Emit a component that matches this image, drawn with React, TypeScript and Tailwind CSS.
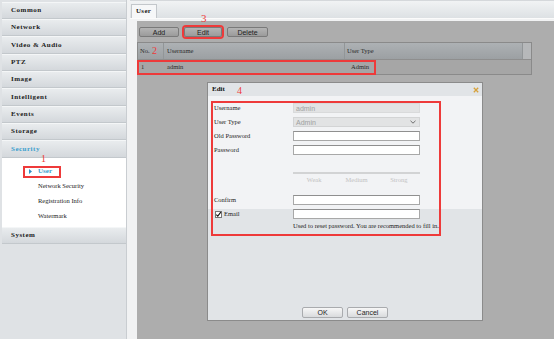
import React from "react";

function NavItem({ label, active, h }: { label: string; active?: boolean; h: string }) {
  return (
    <div
      className={
        "shrink-0 flex items-center pl-[9px] border-t border-t-[#f4f6f7] border-b border-b-[#c3c8cc] bg-linear-to-b from-[#e9ecee] to-[#d4d8dc] text-[7px] font-bold tracking-[0.5px] " +
        h +
        (active ? " text-[#3a9fce]" : " text-[#1b1b1b]")
      }
    >
      {label}
    </div>
  );
}

function GrayBtn({ label, w, mark }: { label: string; w: string; mark?: boolean }) {
  return (
    <div
      className={
        "h-[10px] flex items-center justify-center rounded-[2px] border border-[#7a7a7a] bg-linear-to-b from-[#b4b4b4] to-[#9b9b9b] text-[7px] leading-none text-[#1e1e1e] font-['Liberation_Sans',sans-serif] " +
        w +
        (mark ? " ring-2 ring-[#ee3a3a]" : "")
      }
    >
      {label}
    </div>
  );
}

function DlgBtn({ label }: { label: string }) {
  return (
    <div className="w-[41px] h-[11px] flex items-center justify-center rounded-[2px] border border-[#a9abae] bg-linear-to-b from-[#f7f7f7] to-[#d9dbdd] text-[7px] leading-none text-[#1e1e1e] font-['Liberation_Sans',sans-serif]">
      {label}
    </div>
  );
}

function Field({ label, children, mt }: { label: string; children?: React.ReactNode; mt: string }) {
  return (
    <div className={"flex items-center h-[10px] " + mt}>
      <div className="w-[79px] text-[6.5px] leading-none text-[#222]">{label}</div>
      {children}
    </div>
  );
}

function WhiteInput() {
  return <div className="w-[127px] h-[10px] bg-white border border-[#a8a8a8] border-t-[#8f8f8f]" />;
}

export default function App() {
  const items: [string, string][] = [
    ["Common", "h-[17px]"],
    ["Network", "h-[17px]"],
    ["Video & Audio", "h-[18px]"],
    ["PTZ", "h-[17px]"],
    ["Image", "h-[17px]"],
    ["Intelligent", "h-[18px]"],
    ["Events", "h-[17px]"],
    ["Storage", "h-[17px]"],
  ];
  return (
    <div className="relative w-[554px] h-[339px] flex overflow-hidden bg-[#f1f2f3] font-['Liberation_Serif',serif]">
      {/* Sidebar */}
      <div className="w-[127px] h-full shrink-0 flex flex-col bg-[#dfe2e5] border-r border-[#c9cdd1] pt-[2px] pl-[2px]">
        {items.map(([n, h]) => (
          <NavItem key={n} label={n} h={h} />
        ))}
        <NavItem label="Security" active h="h-[18px]" />
        <div className="h-[69px] shrink-0 bg-white flex flex-col pt-[6px] text-[6.5px] leading-none text-[#222]">
          <div className="h-[15px] flex items-center">
            <div className="ml-[21px] w-[38px] h-[12px] border-2 border-[#ee3a3a] flex items-center pl-[4px]">
              <svg width="3" height="5" viewBox="0 0 3 5">
                <path d="M0 0 L3 2.5 L0 5 Z" fill="#2f8fc8" />
              </svg>
              <span className="ml-[6px] font-bold text-[#3a9fce] text-[7px]">User</span>
            </div>
          </div>
          <div className="h-[15px] flex items-center pl-[36px]">Network Security</div>
          <div className="h-[15px] flex items-center pl-[36px]">Registration Info</div>
          <div className="h-[15px] flex items-center pl-[36px]">Watermark</div>
        </div>
        <NavItem label="System" h="h-[17px]" />
      </div>

      {/* Main */}
      <div className="flex-1 flex flex-col pl-[3px]">
        <div className="h-[19px] shrink-0 bg-linear-to-b from-[#f1f3f4] to-[#dde1e4] border-t border-t-[#d5d8db] border-b border-b-[#fbfbfb] flex items-end pl-[1px]">
          <div className="h-[14px] w-[26px] bg-[#f6f7f8] border border-[#c3c7cb] border-b-0 flex items-center pl-[4px] text-[7px] font-bold tracking-[0.3px] text-[#222]">
            User
          </div>
        </div>
        <div className="flex-1 flex pt-[2px] pl-[7px]">
          <div className="flex-1 relative bg-[#adadad] flex flex-col">
            <div className="flex gap-[5px] pt-[6px] pl-[2px]">
              <GrayBtn label="Add" w="w-[40px]" />
              <GrayBtn label="Edit" w="w-[38px]" mark />
              <GrayBtn label="Delete" w="w-[41px]" />
            </div>
            <div className="mt-[5px] w-[395px] border border-[#8a8a8a] text-[6.5px] leading-none text-[#2a2a2a]">
              <div className="h-[16px] grid grid-cols-[26px_181px_178px_1fr] bg-linear-to-b from-[#adb1b4] to-[#9ca0a3]">
                <div className="flex items-center pl-[2px] border-r border-[#929698]">No.</div>
                <div className="flex items-center pl-[3px] border-r border-[#929698]">Username</div>
                <div className="flex items-center pl-[2px] border-r border-[#929698]">User Type</div>
                <div className="bg-[#b6b8ba]" />
              </div>
              <div className="relative h-[15px] grid grid-cols-[26px_181px_1fr] bg-[#a6a6a6] border-t border-[#8e8e8e]">
                <div className="flex items-center pl-[3px]">1</div>
                <div className="flex items-center pl-[3px]">admin</div>
                <div className="flex items-center pl-[6px]">Admin</div>
                <div className="absolute left-[-1px] top-0 w-[239px] h-[15px] border-2 border-[#ee3a3a] pointer-events-none" />
              </div>
            </div>

            {/* Modal dialog */}
            <div className="absolute left-[70px] top-[61px] w-[276px] h-[239px] border border-[#8b8b8b] bg-[#f2f3f5] flex flex-col">
              <div className="h-[13px] shrink-0 bg-[#e1e4e7] flex items-center justify-between pl-[4px] pr-[3px]">
                <span className="text-[7px] font-bold text-[#111]">Edit</span>
                <svg width="6" height="6" viewBox="0 0 6 6">
                  <path d="M0.8 0.8 L5.2 5.2 M5.2 0.8 L0.8 5.2" stroke="#d7a13a" strokeWidth="1.3" />
                </svg>
              </div>
              <div className="flex flex-col pl-[6px] pb-[4px]">
                <Field label="Username" mt="mt-[7px]">
                  <div className="w-[127px] h-[10px] bg-[#e2e3e4] border border-[#d9dadb] flex items-center pl-[2px] text-[7px] leading-none text-[#a0a0a0] font-['Liberation_Sans',sans-serif]">
                    admin
                  </div>
                </Field>
                <Field label="User Type" mt="mt-[4px]">
                  <div className="w-[127px] h-[10px] bg-[#e2e3e4] border border-[#d3d4d5] flex items-center justify-between pl-[2px] pr-[3px] text-[7px] leading-none text-[#a0a0a0] font-['Liberation_Sans',sans-serif]">
                    Admin
                    <svg width="6" height="4" viewBox="0 0 6 4">
                      <path d="M0.5 0.8 L3 3.2 L5.5 0.8" stroke="#6e6e6e" strokeWidth="1" fill="none" />
                    </svg>
                  </div>
                </Field>
                <Field label="Old Password" mt="mt-[4px]">
                  <WhiteInput />
                </Field>
                <Field label="Password" mt="mt-[4px]">
                  <WhiteInput />
                </Field>
                <div className="ml-[79px] mt-[17px] w-[127px] h-[2px] bg-[#d2d3d4]" />
                <div className="ml-[79px] mt-[2px] w-[127px] h-[8px] grid grid-cols-3 text-center text-[6.5px] leading-[8px] text-[#c2c2c2]">
                  <span>Weak</span>
                  <span>Medium</span>
                  <span>Strong</span>
                </div>
                <Field label="Confirm" mt="mt-[11px]">
                  <WhiteInput />
                </Field>
              </div>
              <div className="flex-1 flex flex-col bg-[#e1e4e7] pl-[6px] pb-[2px]">
                <div className="flex items-center h-[10px]">
                  <div className="w-[79px] flex items-center">
                    <svg className="ml-[1px]" width="7" height="7" viewBox="0 0 7 7">
                      <rect x="0.5" y="0.5" width="6" height="6" fill="#fff" stroke="#767676" />
                      <path d="M1.3 3.6 L2.8 5.2 L5.8 1.2" stroke="#111" strokeWidth="1.1" fill="none" />
                    </svg>
                    <span className="ml-[2px] text-[6.5px] leading-none text-[#222]">Email</span>
                  </div>
                  <WhiteInput />
                </div>
                <div className="ml-[79px] mt-[3px] h-[8px] text-[6.5px] leading-[8px] text-[#222] whitespace-nowrap">
                  Used to reset password. You are recommended to fill in.
                </div>
                <div className="flex-1" />
                <div className="flex justify-center gap-[4px] pr-[6px]">
                  <DlgBtn label="OK" />
                  <DlgBtn label="Cancel" />
                </div>
              </div>
              <div className="absolute left-[3px] top-[18px] w-[230px] h-[135px] border-2 border-[#ee3a3a] pointer-events-none" />
            </div>
          </div>
        </div>
      </div>

      {/* Annotation numbers */}
      <span className="absolute left-[41px] top-[154px] text-[10px] leading-none text-[#ee3a3a]">1</span>
      <span className="absolute left-[152px] top-[46px] text-[10px] leading-none text-[#ee3a3a]">2</span>
      <span className="absolute left-[201px] top-[13px] text-[11px] leading-none text-[#ee3a3a]">3</span>
      <span className="absolute left-[237px] top-[86px] text-[10px] leading-none text-[#ee3a3a]">4</span>
    </div>
  );
}
